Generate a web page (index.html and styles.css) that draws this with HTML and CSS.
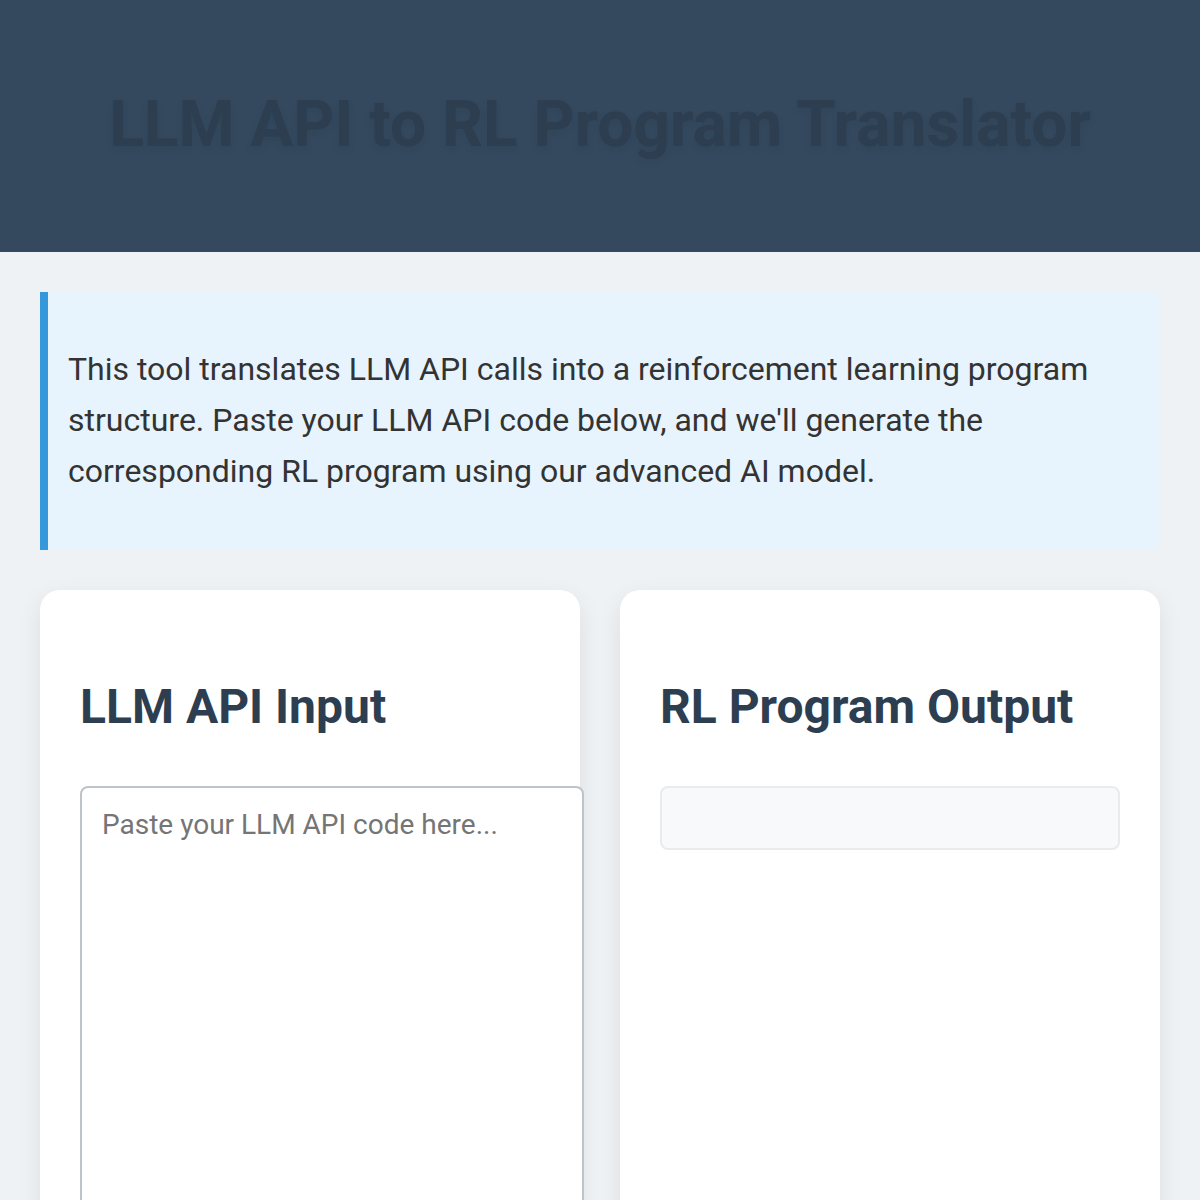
FILE: index.html
```html
<!DOCTYPE html>
<html lang="en">
<head>
<meta charset="utf-8">
<title>LLM API to RL Program Translator</title>
<link rel="stylesheet" href="styles.css">
</head>
<body>
<header class="site-header">
  <h1 class="site-title">LLM API to RL Program Translator</h1>
</header>
<main class="container">
  <section class="info">
    <p>This tool translates LLM API calls into a reinforcement learning program structure. Paste your LLM API code below, and we'll generate the corresponding RL program using our advanced AI model.</p>
  </section>
  <div class="panels">
    <section class="card">
      <h2 class="card-title">LLM API Input</h2>
      <textarea class="code-input" placeholder="Paste your LLM API code here..."></textarea>
    </section>
    <section class="card">
      <h2 class="card-title">RL Program Output</h2>
      <div class="output"></div>
    </section>
  </div>
</main>
</body>
</html>
```
FILE: styles.css
```css
html, body {
  margin: 0;
  padding: 0;
}
body {
  background: #eef2f5;
  font-family: Roboto, "Liberation Sans", Arial, sans-serif;
  font-size: 32px;
  line-height: 1.6;
  color: #333333;
}
.site-header {
  background: #34495e;
  height: 252px;
  box-sizing: border-box;
  padding-top: 74px;
  text-align: center;
}
.site-title {
  margin: 0;
  font-size: 64px;
  line-height: 102px;
  font-weight: 700;
  color: #2c3e50;
  text-shadow: 0 4px 8px rgba(0, 0, 0, 0.06);
}
.container {
  padding: 40px;
}
.info {
  background: #e8f4fd;
  border-left: 8px solid #3498db;
  padding: 20px;
  border-radius: 0 8px 8px 0;
}
.info p {
  margin: 32px 0;
}
.panels {
  display: grid;
  grid-template-columns: 1fr 1fr;
  gap: 40px;
  margin-top: 40px;
}
.card {
  background: #ffffff;
  border-radius: 20px;
  padding: 40px;
  min-height: 700px;
  box-shadow: 0 8px 24px rgba(0, 0, 0, 0.08);
}
.card-title {
  font-size: 48px;
  font-weight: 700;
  color: #2c3e50;
  margin: 0.83em 0;
}
.code-input {
  display: block;
  width: 100%;
  height: 600px;
  padding: 20px;
  border: 2px solid #bdc3c7;
  border-radius: 8px;
  font-family: Roboto, "Liberation Sans", Arial, sans-serif;
  font-size: 28px;
  line-height: normal;
  color: #333333;
  background: #ffffff;
  resize: vertical;
  margin: 0;
}
.code-input::placeholder {
  color: #757575;
}
.output {
  background: #f8f9fa;
  border: 2px solid #e9ecef;
  border-radius: 8px;
  padding: 30px;
}
```
